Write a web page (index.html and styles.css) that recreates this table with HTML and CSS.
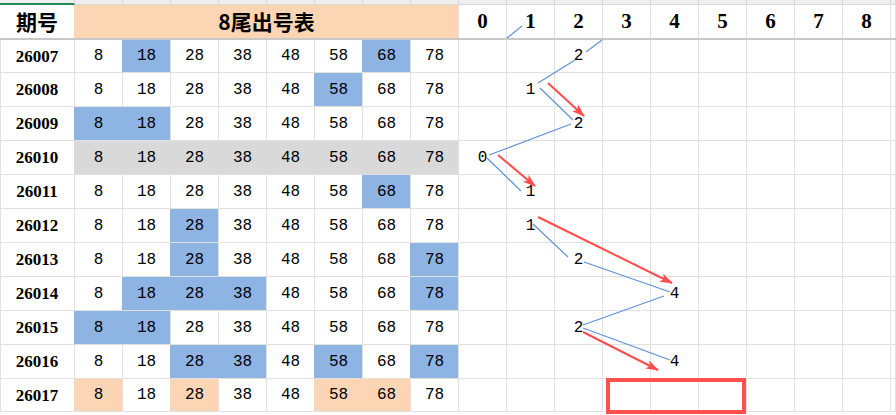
FILE: index.html
```html
<!DOCTYPE html>
<html lang="zh">
<head>
<meta charset="utf-8">
<title>8尾出号表</title>
<link rel="stylesheet" href="styles.css">
</head>
<body>
<div class="sheet">
  <div class="row strip">
    <div class="c sel"></div><div class="c"></div><div class="c"></div><div class="c"></div><div class="c"></div><div class="c"></div><div class="c"></div><div class="c"></div><div class="c"></div><div class="c"></div><div class="c"></div><div class="c"></div><div class="c"></div><div class="c"></div><div class="c"></div><div class="c"></div><div class="c"></div><div class="c"></div><div class="c"></div>
  </div>
  <div class="row head">
    <div class="c hcn">期号</div>
    <div class="c hcn title">8尾出号表</div>
    <div class="c hd">0</div><div class="c hd">1</div><div class="c hd">2</div><div class="c hd">3</div><div class="c hd">4</div><div class="c hd">5</div><div class="c hd">6</div><div class="c hd">7</div><div class="c hd">8</div>
    <div class="c"></div>
  </div>

  <div class="row first">
    <div class="c id">26007</div>
    <div class="c">8</div><div class="c b">18</div><div class="c">28</div><div class="c">38</div><div class="c">48</div><div class="c">58</div><div class="c b">68</div><div class="c">78</div>
    <div class="c"></div><div class="c"></div><div class="c">2</div><div class="c"></div><div class="c"></div><div class="c"></div><div class="c"></div><div class="c"></div><div class="c"></div>
    <div class="c"></div>
  </div>
  <div class="row">
    <div class="c id">26008</div>
    <div class="c">8</div><div class="c">18</div><div class="c">28</div><div class="c">38</div><div class="c">48</div><div class="c b">58</div><div class="c">68</div><div class="c">78</div>
    <div class="c"></div><div class="c">1</div><div class="c"></div><div class="c"></div><div class="c"></div><div class="c"></div><div class="c"></div><div class="c"></div><div class="c"></div>
    <div class="c"></div>
  </div>
  <div class="row">
    <div class="c id">26009</div>
    <div class="c b">8</div><div class="c b">18</div><div class="c">28</div><div class="c">38</div><div class="c">48</div><div class="c">58</div><div class="c">68</div><div class="c">78</div>
    <div class="c"></div><div class="c"></div><div class="c">2</div><div class="c"></div><div class="c"></div><div class="c"></div><div class="c"></div><div class="c"></div><div class="c"></div>
    <div class="c"></div>
  </div>
  <div class="row">
    <div class="c id">26010</div>
    <div class="c g">8</div><div class="c g">18</div><div class="c g">28</div><div class="c g">38</div><div class="c g">48</div><div class="c g">58</div><div class="c g">68</div><div class="c g">78</div>
    <div class="c">0</div><div class="c"></div><div class="c"></div><div class="c"></div><div class="c"></div><div class="c"></div><div class="c"></div><div class="c"></div><div class="c"></div>
    <div class="c"></div>
  </div>
  <div class="row">
    <div class="c id">26011</div>
    <div class="c">8</div><div class="c">18</div><div class="c">28</div><div class="c">38</div><div class="c">48</div><div class="c">58</div><div class="c b">68</div><div class="c">78</div>
    <div class="c"></div><div class="c">1</div><div class="c"></div><div class="c"></div><div class="c"></div><div class="c"></div><div class="c"></div><div class="c"></div><div class="c"></div>
    <div class="c"></div>
  </div>
  <div class="row">
    <div class="c id">26012</div>
    <div class="c">8</div><div class="c">18</div><div class="c b">28</div><div class="c">38</div><div class="c">48</div><div class="c">58</div><div class="c">68</div><div class="c">78</div>
    <div class="c"></div><div class="c">1</div><div class="c"></div><div class="c"></div><div class="c"></div><div class="c"></div><div class="c"></div><div class="c"></div><div class="c"></div>
    <div class="c"></div>
  </div>
  <div class="row">
    <div class="c id">26013</div>
    <div class="c">8</div><div class="c">18</div><div class="c b">28</div><div class="c">38</div><div class="c">48</div><div class="c">58</div><div class="c">68</div><div class="c b">78</div>
    <div class="c"></div><div class="c"></div><div class="c">2</div><div class="c"></div><div class="c"></div><div class="c"></div><div class="c"></div><div class="c"></div><div class="c"></div>
    <div class="c"></div>
  </div>
  <div class="row">
    <div class="c id">26014</div>
    <div class="c">8</div><div class="c b">18</div><div class="c b">28</div><div class="c b">38</div><div class="c">48</div><div class="c">58</div><div class="c">68</div><div class="c b">78</div>
    <div class="c"></div><div class="c"></div><div class="c"></div><div class="c"></div><div class="c">4</div><div class="c"></div><div class="c"></div><div class="c"></div><div class="c"></div>
    <div class="c"></div>
  </div>
  <div class="row">
    <div class="c id">26015</div>
    <div class="c b">8</div><div class="c b">18</div><div class="c">28</div><div class="c">38</div><div class="c">48</div><div class="c">58</div><div class="c">68</div><div class="c">78</div>
    <div class="c"></div><div class="c"></div><div class="c">2</div><div class="c"></div><div class="c"></div><div class="c"></div><div class="c"></div><div class="c"></div><div class="c"></div>
    <div class="c"></div>
  </div>
  <div class="row">
    <div class="c id">26016</div>
    <div class="c">8</div><div class="c">18</div><div class="c b">28</div><div class="c b">38</div><div class="c">48</div><div class="c b">58</div><div class="c">68</div><div class="c b">78</div>
    <div class="c"></div><div class="c"></div><div class="c"></div><div class="c"></div><div class="c">4</div><div class="c"></div><div class="c"></div><div class="c"></div><div class="c"></div>
    <div class="c"></div>
  </div>
  <div class="row last">
    <div class="c id">26017</div>
    <div class="c p">8</div><div class="c">18</div><div class="c p">28</div><div class="c">38</div><div class="c">48</div><div class="c p">58</div><div class="c p">68</div><div class="c">78</div>
    <div class="c"></div><div class="c"></div><div class="c"></div><div class="c"></div><div class="c"></div><div class="c"></div><div class="c"></div><div class="c"></div><div class="c"></div>
    <div class="c"></div>
  </div>
</div>

<svg class="overlay" width="896" height="415" viewBox="0 0 896 415" xmlns="http://www.w3.org/2000/svg">
  <defs>
    <marker id="ah" markerUnits="userSpaceOnUse" markerWidth="14" markerHeight="10" refX="12" refY="4.5" orient="auto">
      <path d="M0,0 L13,4.5 L0,9 L3,4.5 Z" fill="#ff4d4d"/>
    </marker>
  </defs>
  <g class="blue">
    <line x1="507" y1="38" x2="522" y2="26"/>
    <line x1="586" y1="52" x2="602" y2="40"/>
    <line x1="538" y1="83" x2="575" y2="60"/>
    <line x1="540" y1="88" x2="573" y2="120"/>
    <line x1="571" y1="124" x2="489" y2="155"/>
    <line x1="487" y1="158" x2="521" y2="191"/>
    <line x1="533" y1="224" x2="568" y2="257"/>
    <line x1="584" y1="262" x2="670" y2="292"/>
    <line x1="664" y1="296" x2="583" y2="325"/>
    <line x1="583" y1="328" x2="670" y2="360"/>
  </g>
  <g class="red">
    <line x1="548" y1="83" x2="584" y2="116" marker-end="url(#ah)"/>
    <line x1="498" y1="155" x2="535" y2="186" marker-end="url(#ah)"/>
    <line x1="538" y1="217" x2="672" y2="283" marker-end="url(#ah)"/>
    <line x1="583" y1="332" x2="658" y2="370" marker-end="url(#ah)"/>
  </g>
  <rect class="box" x="608" y="380" width="136" height="32"/>
</svg>
</body>
</html>
```

FILE: styles.css
```css
html, body {
  margin: 0;
  padding: 0;
}

body {
  width: 896px;
  height: 415px;
  overflow: hidden;
  position: relative;
  background: #ffffff;
  font-family: "Liberation Mono", "DejaVu Sans Mono", monospace;
  color: #000;
}

.sheet {
  display: flex;
  flex-direction: column;
  height: 415px;
  overflow: hidden;
}

.row {
  display: grid;
  grid-template-columns: 75px repeat(17, 48px) 1fr;
  box-sizing: border-box;
  height: 34px;
  border-bottom: 1px solid #e1e1e1;
  flex: none;
}

.row.first {
  height: 33px;
}

.row.last {
  flex: 1 1 auto;
  height: auto;
  border-bottom: none;
}

.c {
  box-sizing: border-box;
  border-right: 1px solid #e1e1e1;
  display: flex;
  align-items: center;
  justify-content: center;
  font-size: 16px;
  line-height: 1;
  background: #fff;
}

.row.last .c {
  height: 33px;
  border-bottom: 1px solid #e1e1e1;
}

/* top strip of the sheet (row above, scrolled off) */
.strip {
  height: 5px;
  border-bottom: none;
}
.strip .c {
  background: #efefef;
  border-right-color: #d8d8d8;
  border-bottom: 1px solid #d8d8d8;
}
.strip .c.sel {
  border-bottom: 2px solid #1f8a5a;
}

/* header row */
.head {
  height: 35px;
  border-bottom: 2px solid #c8c8c8;
}
.hcn {
  font-family: "Noto Sans CJK SC", "Noto Sans CJK JP", sans-serif;
  font-weight: 700;
  font-size: 21px;
}
.title {
  grid-column: span 8;
  background: #fcd5b4;
  box-shadow: -1px 0 0 #fcd5b4;
}
.hd {
  font-family: "Liberation Serif", "Times New Roman", serif;
  font-weight: 700;
  font-size: 21px;
}

/* period column */
.id {
  font-family: "Liberation Serif", "Times New Roman", serif;
  font-weight: 700;
  font-size: 17px;
  box-shadow: inset 1px 0 0 #e1e1e1;
}

/* fills */
.b {
  background: #8db4e2;
  box-shadow: -1px 0 0 #8db4e2;
}
.g {
  background: #d9d9d9;
  box-shadow: -1px 0 0 #d9d9d9;
}
.p {
  background: #fcd5b4;
  box-shadow: -1px 0 0 #fcd5b4;
}

/* drawing overlay */
.overlay {
  position: absolute;
  left: 0;
  top: 0;
  pointer-events: none;
}
.blue line {
  stroke: #5f91d6;
  stroke-width: 1.2;
}
.red line {
  stroke: #ff4d4d;
  stroke-width: 2;
}
.box {
  fill: none;
  stroke: #ff5050;
  stroke-width: 4;
}
```
